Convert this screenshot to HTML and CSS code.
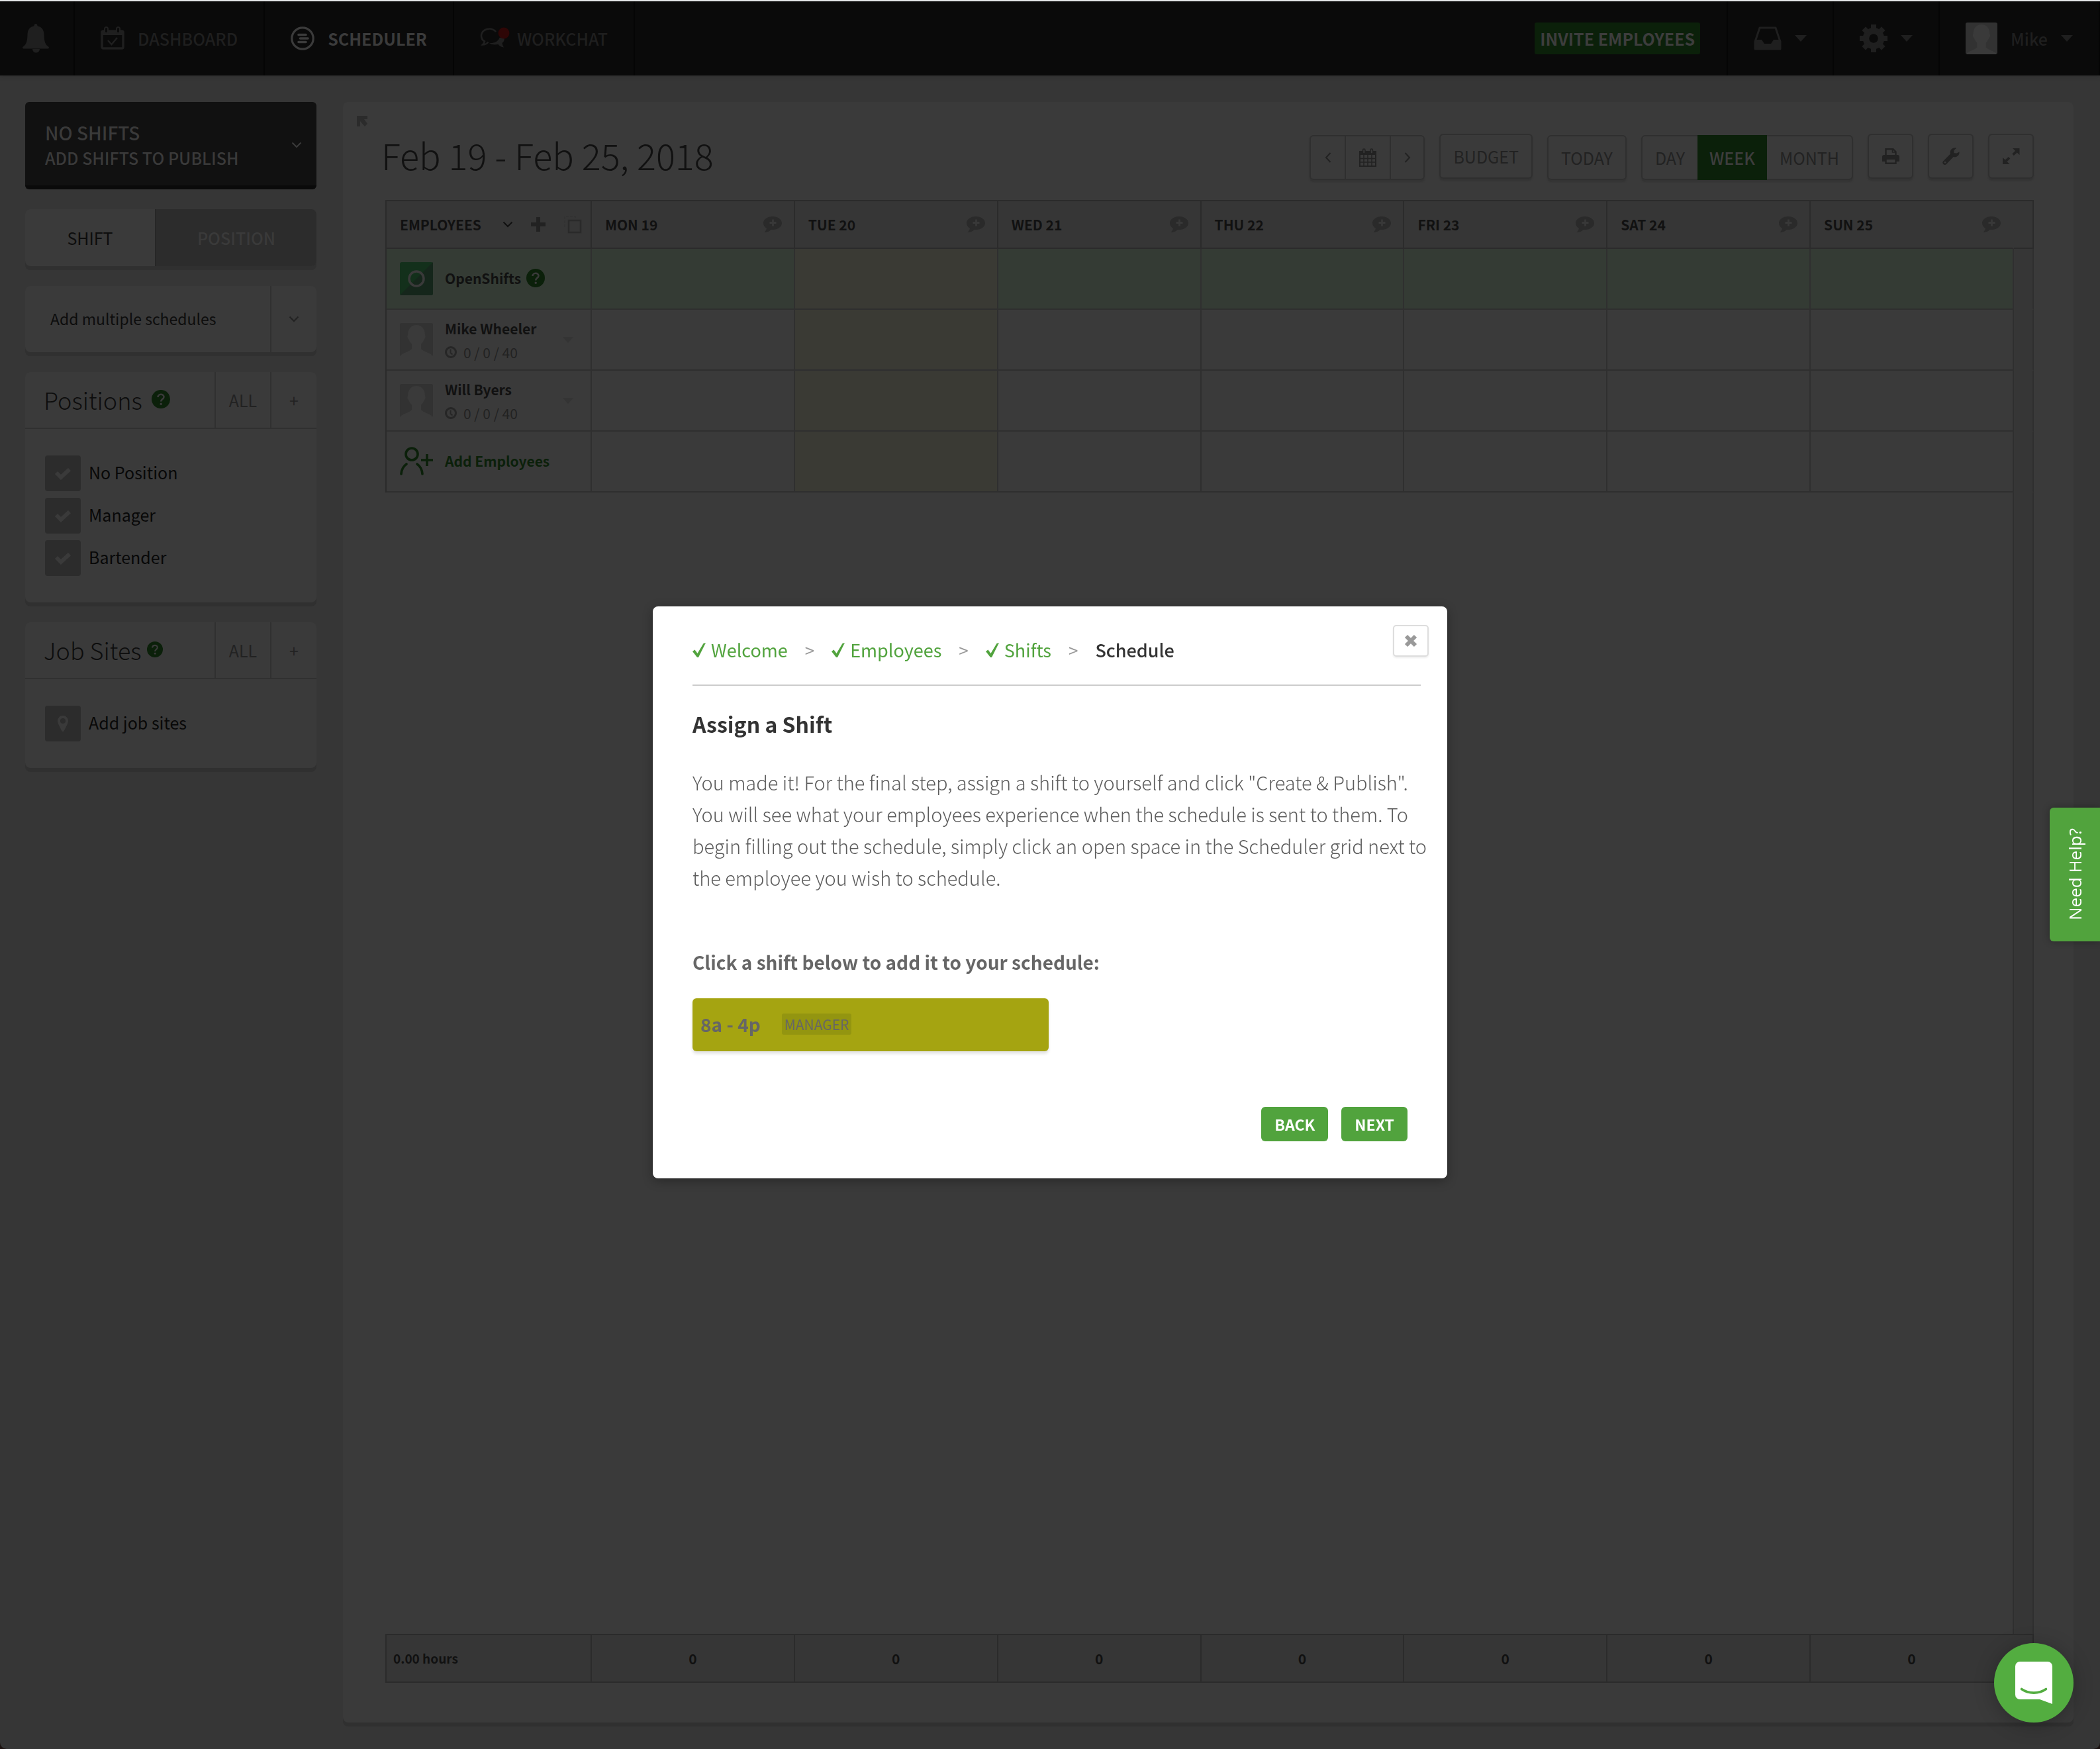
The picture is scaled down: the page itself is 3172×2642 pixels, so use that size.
FILE: index.html
```html
<!DOCTYPE html>
<html lang="en">
<head>
<meta charset="utf-8">
<title>Scheduler</title>
<link rel="stylesheet" href="styles.css">
</head>
<body>
<svg class="defs" aria-hidden="true">
  <symbol id="chevron" viewBox="0 0 16 10"><path d="M1.500 1.500 8 8l6.500-6.500" fill="none" stroke="currentColor" stroke-width="2"/></symbol>
  <symbol id="caret" viewBox="0 0 18 10"><path d="M0 0h18l-9 10z" fill="currentColor"/></symbol>
  <symbol id="help" viewBox="0 0 28 28"><circle cx="14" cy="14" r="14" fill="currentColor"/><path d="M9.500 11c0-5.500 9-5.500 9-.5 0 3.500-4.300 3.300-4.300 7" fill="none" stroke="#3a3a3a" stroke-width="2.600"/><circle cx="14.200" cy="21.300" r="1.700" fill="#3a3a3a"/></symbol>
  <symbol id="comment" viewBox="0 0 28 26"><path d="M14 1c8 0 14 4.500 14 10S22 21 14 21h-2.500C9 23.500 6 25 1.500 25 3.500 23 4.700 21 5 19 2 17 0 14.500 0 11 0 5.500 6 1 14 1z" fill="#2a2a2a"/><path d="M14.500 5.500v10M9.500 10.500h10" stroke="#383838" stroke-width="2.800"/></symbol>
  <symbol id="person" viewBox="0 0 50 50"><rect width="50" height="50" rx="3" fill="#323232"/><path d="M2 50v-2c6-4 14-6 16-9v-7c-3-3-4-6-5-8-2-1-2-5-1-6C12 9 17 3 25 3s13 6 13 15c1 1 1 5-1 6-1 2-2 5-5 8v7c2 3 10 5 16 9v2z" fill="#3a3a3a"/></symbol>
  <symbol id="clock" viewBox="0 0 18 18"><circle cx="9" cy="9" r="7.500" fill="none" stroke="currentColor" stroke-width="3"/><path d="M8.500 4.500V10l3 2.500" fill="none" stroke="currentColor" stroke-width="2"/></symbol>
</svg>

<header class="topbar">
  <nav class="topnav">
    <a class="nav-item nav-bell" href="#" aria-label="Notifications"><svg width="40" height="44" viewBox="0 0 40 44"><path d="M20 0c1.500 0 2.400 1 2.600 3.200C29 4.500 32.300 9 32.500 16c.3 10 1.500 15 6 18 2 1.500 2 3.500 0 3.500H1.500c-2 0-2-2 0-3.500 4.500-3 5.700-8 6-18C7.700 9 11 4.500 17.400 3.200 17.600 1 18.500 0 20 0zM15 38h11c0 3.500-2.500 5.500-5.500 5.500S15 41.500 15 38z" fill="currentColor"/></svg></a>
    <a class="nav-item" href="#"><svg width="36" height="36" viewBox="0 0 36 36"><rect x="2" y="7" width="32" height="26" rx="2" fill="none" stroke="currentColor" stroke-width="3.500"/><path d="M2 6h32v7H2z" fill="currentColor"/><rect x="6" y="1" width="5" height="9" rx="2.500" fill="#0a0a0a" stroke="currentColor" stroke-width="2"/><rect x="24" y="1" width="5" height="9" rx="2.500" fill="#0a0a0a" stroke="currentColor" stroke-width="2"/><path d="m11 21 5.500 6L25 17" fill="none" stroke="currentColor" stroke-width="2.500"/></svg>DASHBOARD</a>
    <a class="nav-item active" href="#"><svg width="36" height="36" viewBox="0 0 36 36"><circle cx="18" cy="18" r="16.200" fill="none" stroke="currentColor" stroke-width="3.200"/><path d="M12 12.500h11M14.500 18H26M12 23.500h11" stroke="currentColor" stroke-width="3.600" stroke-linecap="round"/></svg>SCHEDULER</a>
    <a class="nav-item nav-chat" href="#"><svg width="46" height="36" viewBox="0 0 46 36"><path d="M24 8C21 4.500 18 3.500 14.500 3.500 7.500 3.500 2 8 2 14c0 3.800 2 7 5 8.500-.2 2-1.500 3.500-3 5 4 0 6.500-1.500 8.500-4" fill="none" stroke="currentColor" stroke-width="2.600"/><path d="M14 25c8 .5 13-2 15.500-8l7-1.500c1 5-.5 7.500-3 9.500.2 2 1 4 2.500 6.500-4-.5-6.500-2-8.500-4.500-5.500 1-10 .5-13.500-2z" fill="currentColor"/><circle cx="36" cy="10" r="8.500" fill="#2e0606"/></svg>WORKCHAT</a>
  </nav>
  <div class="topright">
    <button class="invite" type="button">INVITE EMPLOYEES</button>
    <a class="nav-item nav-tool" href="#" aria-label="Inbox"><svg width="42" height="36" viewBox="0 0 42 36"><path d="M9 2h24l7 21v11H2V23z" fill="none" stroke="currentColor" stroke-width="3" stroke-linejoin="round"/><path d="M1 20h11l4 6h10l4-6h11v15H1z" fill="currentColor"/></svg><svg width="18" height="10"><use href="#caret"/></svg></a>
    <a class="nav-item nav-tool" href="#" aria-label="Settings"><svg width="42" height="42" viewBox="0 0 42 42"><circle cx="21" cy="21" r="11.500" fill="none" stroke="currentColor" stroke-width="9.500"/><path d="M21 0v9M21 33v9M0 21h9M33 21h9M6.200 6.200l6.300 6.300M29.500 29.500l6.300 6.300M35.800 6.200l-6.300 6.300M12.500 29.500l-6.300 6.300" stroke="currentColor" stroke-width="8"/></svg><svg width="18" height="10"><use href="#caret"/></svg></a>
    <a class="nav-item nav-user" href="#"><svg width="48" height="48" viewBox="0 0 50 50"><use href="#person"/></svg>Mike<svg width="18" height="10"><use href="#caret"/></svg></a>
  </div>
</header>

<main class="page">
  <aside class="sidebar">
    <button class="publish" type="button"><span><span class="publish-title">NO SHIFTS</span><span class="publish-sub">ADD SHIFTS TO PUBLISH</span></span><svg width="16" height="10"><use href="#chevron"/></svg></button>
    <div class="toggle card"><button class="on" type="button">SHIFT</button><button class="off" type="button">POSITION</button></div>
    <button class="schedules card" type="button"><span class="schedules-label">Add multiple schedules</span><span class="square"><svg width="16" height="10"><use href="#chevron"/></svg></span></button>
    <section class="card">
      <header class="card-head"><h2>Positions<svg class="help" width="28" height="28"><use href="#help"/></svg></h2><button class="all" type="button">ALL</button><button class="square" type="button" aria-label="Add position">+</button></header>
      <div class="card-body">
        <label class="option"><input type="checkbox" checked>No Position</label>
        <label class="option"><input type="checkbox" checked>Manager</label>
        <label class="option"><input type="checkbox" checked>Bartender</label>
      </div>
    </section>
    <section class="card">
      <header class="card-head"><h2 class="tight">Job Sites<svg class="help" width="24" height="24" viewBox="0 0 28 28"><use href="#help"/></svg></h2><button class="all" type="button">ALL</button><button class="square" type="button" aria-label="Add job site">+</button></header>
      <div class="card-body">
        <a class="option" href="#"><span class="pin"><svg width="16" height="24" viewBox="0 0 16 24"><path d="M8 0c4.500 0 8 3.500 8 8 0 3.500-3 8.500-6 14.500-1 2-3 2-4 0C3 16.500 0 11.500 0 8c0-4.500 3.500-8 8-8zm0 4a4 4 0 1 0 0 8 4 4 0 0 0 0-8z" fill="currentColor" fill-rule="evenodd"/></svg></span>Add job sites</a>
      </div>
    </section>
  </aside>

  <section class="panel">
    <svg class="collapse" width="18" height="18" viewBox="0 0 18 18"><path d="M1 1h16v5h-5l5 7-4 4-7-8v8H1z" fill="#2b2b2b"/></svg>
    <header class="panel-head">
      <h1>Feb 19 - Feb 25, 2018</h1>
      <div class="tools">
        <div class="group low"><button class="arrow" type="button" aria-label="Previous"><svg width="10" height="16" viewBox="0 0 10 16"><path d="M8.500 1 2 8l6.500 7" fill="none" stroke="currentColor" stroke-width="2"/></svg></button><button class="date" type="button" aria-label="Pick a date"><svg width="26" height="28" viewBox="0 0 26 28"><path d="M1 5h24v22H1z" fill="none" stroke="currentColor" stroke-width="2"/><path d="M1 5h24v5H1z" fill="currentColor"/><path d="M1 15.500h24M1 21h24M7 9v18M13 9v18M19 9v18" stroke="currentColor" stroke-width="1.500"/><rect x="5.500" y="1" width="3.500" height="7" rx="1.700" fill="#3a3a3a" stroke="currentColor" stroke-width="1.500"/><rect x="17" y="1" width="3.500" height="7" rx="1.700" fill="#3a3a3a" stroke="currentColor" stroke-width="1.500"/></svg></button><button class="arrow" type="button" aria-label="Next"><svg width="10" height="16" viewBox="0 0 10 16"><path d="M1.500 1 8 8l-6.500 7" fill="none" stroke="currentColor" stroke-width="2"/></svg></button></div>
        <div class="group"><button type="button">BUDGET</button></div>
        <div class="group low"><button type="button">TODAY</button></div>
        <div class="group low"><button type="button">DAY</button><button class="current" type="button">WEEK</button><button type="button">MONTH</button></div>
        <div class="group"><button class="icon" type="button" aria-label="Print"><svg width="26" height="24" viewBox="0 0 26 24"><path d="M5.500 11V1.200h11l4 4V11" fill="none" stroke="currentColor" stroke-width="2.400"/><path d="M15.500 1v5h5" fill="none" stroke="currentColor" stroke-width="1.500"/><path d="M3 10h20c2 0 3 1 3 3v7h-5v-3H5v3H0v-7c0-2 1-3 3-3z" fill="currentColor"/><path d="M5.500 16v6.800h15V16" fill="none" stroke="currentColor" stroke-width="2.400"/></svg></button></div>
        <div class="group"><button class="icon" type="button" aria-label="Tools"><svg width="26" height="26" viewBox="0 0 26 26"><path d="M25.500 6.500c.5 5-4 9-9 7.500L6 25c-1.500 1.500-3.500 1-4.700 0-1.300-1.300-1.500-3.300 0-4.800L12 9.500C10.500 4.500 14.500 0 19.500.3c1 .1 1.500.4 1.500.4L17.500 4v4.300l4 .2z" fill="currentColor"/><circle cx="4" cy="22.200" r="1.300" fill="#3a3a3a"/></svg></button></div>
        <div class="group"><button class="icon" type="button" aria-label="Full screen"><svg width="26" height="24" viewBox="0 0 26 24"><path d="M15 0h10.500v10l-3.700-3.500-5 4.500-2.500-2.500 4.700-4.700zM0 14l3.800 3.500 5-4.500 2.500 2.500-4.700 4.700 3.900 3.800H0z" fill="currentColor"/></svg></button></div>
      </div>
    </header>

    <div class="schedule">
      <table class="grid">
        <colgroup><col class="c-name"><col span="7"><col class="c-gutter"></colgroup>
        <thead><tr>
          <th scope="col"><div class="th emp-head"><button type="button">EMPLOYEES<svg width="16" height="10"><use href="#chevron"/></svg></button><svg class="dim" width="22" height="22" viewBox="0 0 22 22"><path d="M11 0v22M0 11h22" stroke="currentColor" stroke-width="6"/></svg><svg width="28" height="28" viewBox="0 0 28 28"><path d="M2 18V2h16v4" fill="none" stroke="#323232" stroke-width="2" stroke-dasharray="4 2"/><rect x="8" y="8" width="18" height="18" fill="none" stroke="#2a2a2a" stroke-width="2.500"/></svg></div></th>
          <th scope="col"><div class="th">MON 19<svg width="28" height="26"><use href="#comment"/></svg></div></th>
          <th scope="col"><div class="th">TUE 20<svg width="28" height="26"><use href="#comment"/></svg></div></th>
          <th scope="col"><div class="th">WED 21<svg width="28" height="26"><use href="#comment"/></svg></div></th>
          <th scope="col"><div class="th">THU 22<svg width="28" height="26"><use href="#comment"/></svg></div></th>
          <th scope="col"><div class="th">FRI 23<svg width="28" height="26"><use href="#comment"/></svg></div></th>
          <th scope="col"><div class="th">SAT 24<svg width="28" height="26"><use href="#comment"/></svg></div></th>
          <th scope="col" class="last"><div class="th">SUN 25<svg width="28" height="26"><use href="#comment"/></svg></div></th>
          <th></th>
        </tr></thead>
        <tbody>
          <tr class="open"><td><div class="who"><svg width="50" height="50" viewBox="0 0 50 50"><rect width="50" height="50" rx="3" fill="#13301b"/><path d="M50 0v47a3 3 0 0 1-3 3H0z" fill="#15261b"/><circle cx="25" cy="25" r="11" fill="none" stroke="#3a3a3a" stroke-width="3.500"/></svg><b>OpenShifts<svg class="help" width="28" height="28"><use href="#help"/></svg></b></div></td><td></td><td class="today"></td><td></td><td></td><td></td><td></td><td></td><td class="gutter"></td></tr>
          <tr><td><div class="who"><svg width="50" height="50"><use href="#person"/></svg><div><b>Mike Wheeler</b><span class="hours"><svg width="18" height="18"><use href="#clock"/></svg>0 / 0 / 40</span></div><svg class="more" width="16" height="9" viewBox="0 0 18 10"><use href="#caret"/></svg></div></td><td></td><td class="today"></td><td></td><td></td><td></td><td></td><td></td><td class="gutter"></td></tr>
          <tr><td><div class="who"><svg width="50" height="50"><use href="#person"/></svg><div><b>Will Byers</b><span class="hours"><svg width="18" height="18"><use href="#clock"/></svg>0 / 0 / 40</span></div><svg class="more" width="16" height="9" viewBox="0 0 18 10"><use href="#caret"/></svg></div></td><td></td><td class="today"></td><td></td><td></td><td></td><td></td><td></td><td class="gutter"></td></tr>
          <tr><td><a class="who add" href="#"><svg width="50" height="44" viewBox="0 0 50 44"><g fill="none" stroke="currentColor" stroke-width="3.600" stroke-linecap="round"><circle cx="18" cy="11" r="9"/><path d="M2 41c.5-6 3.500-12 8-15M34 41c-.5-6-3.500-12-8-15"/></g><path d="M41 11v18M32 20h18" stroke="currentColor" stroke-width="3.600"/></svg><b>Add Employees</b></a></td><td></td><td class="today"></td><td></td><td></td><td></td><td></td><td></td><td class="gutter"></td></tr>
        </tbody>
      </table>
      <div class="rest"></div>
      <table class="grid totals">
        <colgroup><col class="c-name"><col span="7"><col class="c-gutter"></colgroup>
        <tbody><tr><th scope="row">0.00 hours</th><td>0</td><td>0</td><td>0</td><td>0</td><td>0</td><td>0</td><td class="last">0</td><td></td></tr></tbody>
      </table>
    </div>
  </section>
</main>

<div class="overlay">
  <section class="modal" role="dialog" aria-labelledby="assign">
    <button class="close" type="button" aria-label="Close"><svg width="20" height="20" viewBox="0 0 20 20"><path d="m3 3 14 14M17 3 3 17" stroke="#999" stroke-width="6"/></svg></button>
    <ol class="crumbs">
      <li class="done"><svg width="20" height="22" viewBox="0 0 20 22"><path d="M0 13 3.500 10.500 7.500 16 16.500 1 20 0 9 22H7z" fill="currentColor"/></svg><a href="#">Welcome</a></li>
      <li class="sep">&gt;</li>
      <li class="done"><svg width="20" height="22" viewBox="0 0 20 22"><path d="M0 13 3.500 10.500 7.500 16 16.500 1 20 0 9 22H7z" fill="currentColor"/></svg><a href="#">Employees</a></li>
      <li class="sep">&gt;</li>
      <li class="done"><svg width="20" height="22" viewBox="0 0 20 22"><path d="M0 13 3.500 10.500 7.500 16 16.500 1 20 0 9 22H7z" fill="currentColor"/></svg><a href="#">Shifts</a></li>
      <li class="sep">&gt;</li>
      <li class="here">Schedule</li>
    </ol>
    <h2 id="assign">Assign a Shift</h2>
    <p>You made it! For the final step, assign a shift to yourself and click "Create &amp; Publish". You will see what your employees experience when the schedule is sent to them. To begin filling out the schedule, simply click an open space in the Scheduler grid next to the employee you wish to schedule.</p>
    <h3>Click a shift below to add it to your schedule:</h3>
    <button class="shift" type="button"><b>8a - 4p</b><span class="tag">MANAGER</span></button>
    <div class="actions"><button type="button">BACK</button><button type="button">NEXT</button></div>
  </section>
</div>

<button class="need-help" type="button">Need Help?</button>
<button class="chat" type="button" aria-label="Open chat"><svg width="56" height="64" viewBox="0 0 56 64"><path d="M7 0h42a7 7 0 0 1 7 7v57L37 57H7a7 7 0 0 1-7-7V7a7 7 0 0 1 7-7z" fill="#fff"/><path d="M9.500 41.500c11 7.500 26 7.500 37 0" fill="none" stroke="#53ad40" stroke-width="3.600" stroke-linecap="round"/></svg></button>
</body>
</html>
```
FILE: styles.css
```css
* { box-sizing: border-box; }

html { background: #1c1210; }

body {
  margin: 0;
  min-height: 100vh;
  display: flex;
  flex-direction: column;
  border-top: 2px solid #e4e6e8;
  border-radius: 0 0 10px 10px;
  background: #363636;
  color: #0d0d0d;
  font: 25px/36px "Noto Sans CJK SC", "Noto Sans", sans-serif;
}

h1, h2, h3, p, ol { margin: 0; padding: 0; font-weight: 400; }
ol { list-style: none; }
a { color: inherit; text-decoration: none; }
svg { display: block; flex: none; }
b { font-weight: 700; }

button {
  margin: 0;
  padding: 0;
  border: 0;
  background: none;
  color: inherit;
  font: inherit;
  text-align: inherit;
}

.defs { position: absolute; width: 0; height: 0; }

/* top bar */
.topbar {
  display: flex;
  justify-content: space-between;
  height: 112px;
  background: #0a0a0a;
  color: #1f1f1f;
  font-weight: 500;
  box-shadow: 0 2px 4px #303030;
}
.topnav, .topright { display: flex; align-items: stretch; }
.nav-item {
  display: flex;
  align-items: center;
  gap: 20px;
  padding: 0 39px;
  border-right: 2px solid #050505;
}
.nav-bell { padding: 0 37px 0 34px; }
.nav-chat { gap: 10px; }
.active { color: #3b3b3b; font-weight: 700; }
.nav-tool { border-right: 0; border-left: 2px solid #050505; }
.nav-user { border-left: 2px solid #050505; }
.invite {
  align-self: center;
  height: 48px;
  margin-right: 40px;
  padding: 0 8px;
  border-radius: 3px;
  background: #0b200a;
  color: #3d3d3d;
  font-weight: 700;
}

/* page */
.page {
  flex: 1;
  display: flex;
  gap: 40px;
  padding: 40px 40px 40px 38px;
}
.sidebar { width: 440px; flex: none; display: flex; flex-direction: column; gap: 30px; }

.publish {
  display: flex;
  align-items: center;
  justify-content: space-between;
  height: 132px;
  padding: 4px 22px 0 30px;
  border-radius: 6px;
  border-bottom: 6px solid #0a0a0a;
  background: #111;
  color: #3a3a3a;
  line-height: 38px;
  font-weight: 500;
}
.publish-title, .publish-sub { display: block; }
.publish-title { font-size: 28px; }

.card {
  border-radius: 8px;
  background: #3a3a3a;
  box-shadow: 0 6px 0 #303030;
}
.toggle { display: flex; height: 86px; }
.toggle button { text-align: center; }
.on { width: 196px; }
.off { flex: 1; background: #2c2c2c; border-left: 2px solid #272727; border-radius: 0 8px 8px 0; color: #3a3a3a; font-weight: 500; }
.schedules { display: flex; height: 100px; align-items: stretch; font-size: 23px; line-height: 98px; }
.schedules-label { flex: 1; padding-left: 38px; }
.square {
  display: flex;
  width: 70px;
  align-items: center;
  justify-content: center;
  border-left: 2px solid #303030;
  color: #222;
}

.card-head { display: flex; height: 86px; border-bottom: 2px solid #303030; }
.card-head h2 {
  flex: 1;
  display: flex;
  align-items: center;
  gap: 14px;
  padding: 0 0 2px 28px;
  font-size: 36px;
  font-weight: 300;
}
.card-head .tight { gap: 8px; }
.help { color: #0b200a; }
.all { width: 84px; border-left: 2px solid #303030; color: #222; text-align: center; }
.card-body { display: flex; flex-direction: column; gap: 10px; padding: 40px 30px; }
.option { display: flex; align-items: flex-start; gap: 12px; line-height: 50px; color: #080808; }
.option input, .pin {
  appearance: none;
  width: 54px;
  height: 54px;
  margin: 0;
  border-radius: 4px;
  background: #2c2c2c;
}
.option input:checked {
  background: #2c2c2c url("data:image/svg+xml,%3Csvg xmlns='http://www.w3.org/2000/svg' width='26' height='20'%3E%3Cpath d='M3 9l7 7L23 4' fill='none' stroke='%233a3a3a' stroke-width='6'/%3E%3C/svg%3E") center no-repeat;
}
.pin { display: flex; align-items: center; justify-content: center; color: #3a3a3a; }

/* schedule panel */
.panel {
  flex: 1;
  position: relative;
  display: flex;
  flex-direction: column;
  padding: 48px 60px 60px 58px;
  border-radius: 8px;
  background: #3a3a3a;
  box-shadow: 0 6px 0 #303030;
}
.collapse { position: absolute; left: 20px; top: 20px; }
.panel-head { display: flex; justify-content: space-between; align-items: flex-start; padding-bottom: 30px; }
.panel-head h1 { font-size: 54px; line-height: 64px; font-weight: 300; color: #111; }
.tools { display: flex; align-items: flex-start; gap: 22px; height: 70px; color: #222; }
.group {
  display: flex;
  height: 68px;
  border: 2px solid #2f2f2f;
  border-radius: 6px;
  box-shadow: 0 3px 2px #343434;
}
.low { margin-top: 2px; }
.group button { padding: 0 19px; text-align: center; }
.group button + button { border-left: 2px solid #2f2f2f; }
.group .arrow, .group .date, .group .icon { display: flex; align-items: center; justify-content: center; padding: 0; }
.arrow { width: 51px; }
.date { width: 68px; }
.icon { width: 65px; }
.group .current { margin: -2px 0; padding: 0 18px; border: 0; background: #0b200a; color: #3d3d3d; font-weight: 500; }
.group .current + button { border-left: 0; }

.schedule { flex: 1; display: flex; flex-direction: column; padding-left: 6px; }
.grid {
  width: 100%;
  table-layout: fixed;
  border-collapse: separate;
  border-spacing: 0;
  border: solid #2b2b2b;
  border-width: 2px 0 0 2px;
  color: #111;
}
.c-name { width: 310px; }
.c-gutter { width: 30px; }
.grid th, .grid td {
  padding: 0;
  border: solid #2f2f2f;
  border-width: 0 2px 2px 0;
}
.grid thead th { height: 72px; border-color: #2b2b2b; background: #363636; font-size: 21px; font-weight: 700; }
.grid thead .last { border-right-color: #363636; }
.grid tbody td { height: 92px; }
.th { display: flex; align-items: center; justify-content: space-between; padding: 0 18px 0 20px; }
.emp-head { padding-right: 13px; }
.emp-head button { display: flex; align-items: center; gap: 32px; font-weight: 700; }
.dim { color: #222; }
.open td { background: #343b34; }
.grid .today { background: #3a3a34; }
.grid .gutter { background: #363636; border-bottom-color: #363636; }
.who { display: flex; align-items: center; gap: 18px; padding: 0 26px 0 20px; font-size: 21px; }
.who b { display: flex; align-items: center; gap: 8px; }
.who > b { padding-bottom: 2px; }
.who > div { padding-top: 2px; }
.hours { display: flex; align-items: center; gap: 10px; color: #222; }
.hours svg { color: #262626; }
.more { margin-left: auto; color: #343434; }
.add { color: #0b200a; }
.rest {
  flex: 1;
  border-right: 2px solid #2f2f2f;
  background: linear-gradient(90deg, transparent calc(100% - 30px), #2f2f2f 0, #2f2f2f calc(100% - 28px), #363636 0);
}
.grid.totals th, .grid.totals td { height: 72px; border-color: #2b2b2b; background: #363636; font-size: 21px; font-weight: 700; text-align: center; }
.grid.totals th { padding-left: 10px; font-size: 19px; text-align: left; }
.grid.totals .last { border-right-color: #363636; }

/* onboarding dialog */
.overlay {
  position: fixed;
  inset: 0;
  display: flex;
  align-items: center;
  justify-content: center;
  padding-top: 54px;
}
.modal {
  position: relative;
  width: 1200px;
  padding: 42px 24px 56px 60px;
  border-radius: 8px;
  background: #fff;
  color: #666;
  box-shadow: 0 4px 16px rgba(0, 0, 0, .3);
  line-height: 48px;
}
.close {
  position: absolute;
  right: 28px;
  top: 28px;
  display: flex;
  align-items: center;
  justify-content: center;
  width: 54px;
  height: 48px;
  border: 2px solid #ddd;
  border-radius: 5px;
  background: #fff;
  box-shadow: 0 2px 3px #eee;
}
.crumbs {
  display: flex;
  margin-right: 16px;
  padding-bottom: 28px;
  border-bottom: 2px solid #ccc;
  font-size: 27px;
}
.crumbs li { display: flex; align-items: center; gap: 8px; }
.done { color: #51a33d; }
.crumbs .sep { padding: 0 26px; color: #999; font-size: 26px; }
.here { color: #333; font-weight: 500; }
.modal h2 { margin-top: 33px; color: #333; font-size: 32px; font-weight: 700; }
.modal p { margin-top: 40px; color: #5c5c5c; font-size: 29px; font-weight: 300; }
.modal h3 { margin-top: 80px; font-size: 28px; font-weight: 700; }
.shift {
  display: flex;
  align-items: center;
  gap: 32px;
  width: 538px;
  height: 80px;
  margin-top: 31px;
  padding: 0 12px 2px;
  border-radius: 6px;
  background: #a5a411;
  box-shadow: 0 4px 4px #e4e4e4;
  font-size: 28px;
}
.tag { padding: 0 4px; border-radius: 3px; background: #939510; font-size: 21px; line-height: 32px; }
.actions { display: flex; justify-content: flex-end; gap: 20px; margin-top: 84px; padding-right: 36px; }
.actions button {
  height: 52px;
  padding: 0 20px;
  border-radius: 6px;
  background: #51a33d;
  color: #fff;
  font-size: 23px;
  font-weight: 700;
}

/* floating helpers */
.need-help {
  position: fixed;
  right: 0;
  top: 50%;
  width: 76px;
  height: 202px;
  border-radius: 0 6px 6px 0;
  background: #51a33d;
  color: #fff;
  font: 26px/76px "Open Sans", sans-serif;
  text-align: center;
  writing-mode: vertical-rl;
  transform: translateY(-50%) rotate(180deg);
  box-shadow: 0 0 12px rgba(0, 0, 0, .3);
}
.chat {
  position: fixed;
  right: 40px;
  bottom: 40px;
  display: flex;
  align-items: center;
  justify-content: center;
  width: 120px;
  height: 120px;
  border-radius: 50%;
  background: #53ad40;
  box-shadow: 0 4px 30px rgba(0, 0, 0, .25);
}
```
